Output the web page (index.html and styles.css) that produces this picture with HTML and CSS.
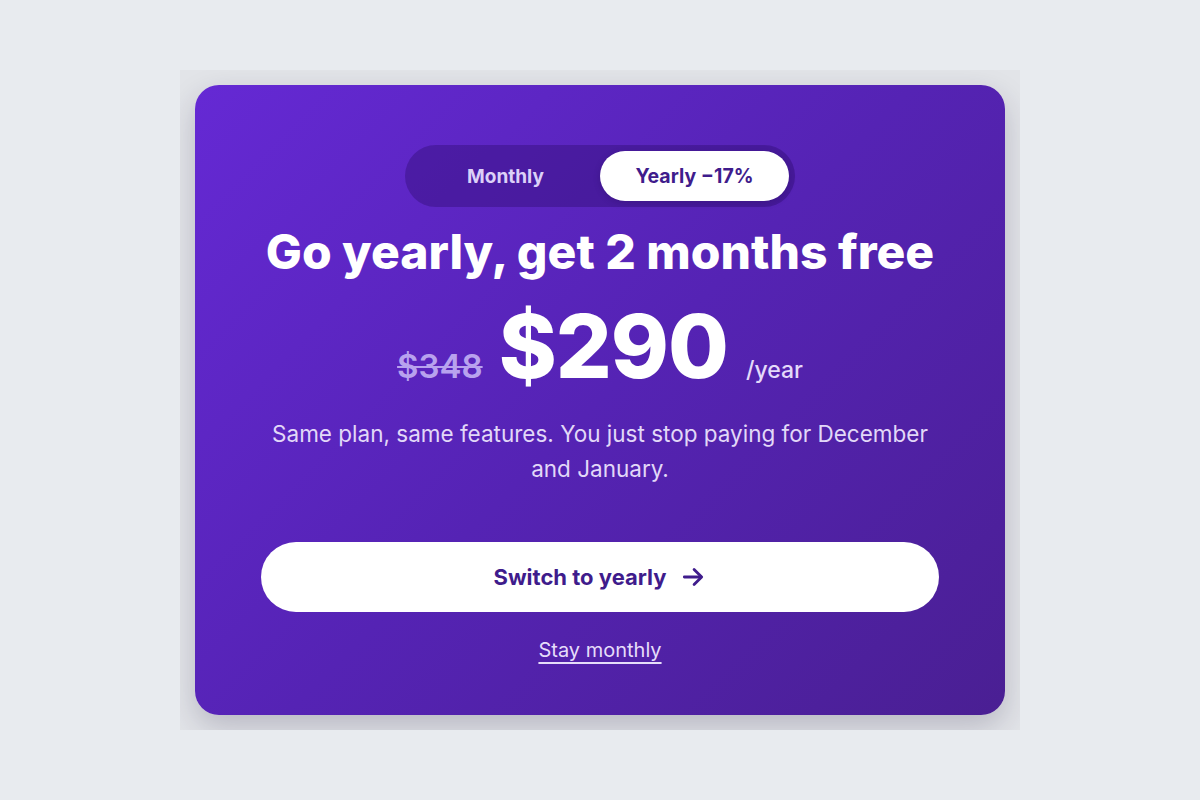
FILE: index.html
```html
<!DOCTYPE html>
<html>
<head>
    <link rel="stylesheet" href="styles.css">
    <title>Upgrade</title>
</head>
<body>
    <section class="stage">
        <div class="card">
            <div class="toggle">
                <button class="toggle-item">Monthly</button>
                <button class="toggle-item active">Yearly &minus;17%</button>
            </div>
            <h1 class="title">Go yearly, get 2 months free</h1>
            <div class="price">
                <span class="price-old">$348</span>
                <span class="price-new">$290</span>
                <span class="price-unit">/year</span>
            </div>
            <p class="note">Same plan, same features. You just stop paying for December and January.</p>
            <button class="cta">
                Switch to yearly
                <svg width="26" height="26" viewBox="0 0 24 24" fill="none" stroke="currentColor" stroke-width="2.6" stroke-linecap="round" stroke-linejoin="round">
                    <path d="M4 12h15" />
                    <path d="M13 5l7 7-7 7" />
                </svg>
            </button>
            <a class="stay" href="#">Stay monthly</a>
        </div>
    </section>
</body>
</html>
```

FILE: styles.css
```css
body {
    margin: 0;
    height: 100vh;
    display: flex;
    align-items: center;
    justify-content: center;
    background: #e8ebef;
    font-family: Inter, "Noto Sans", sans-serif;
}

.stage {
    width: 840px;
    height: 660px;
    box-sizing: border-box;
    padding: 15px;
    background: #e2e4e8;
    overflow: hidden;
}

.card {
    height: 100%;
    box-sizing: border-box;
    padding: 60px 66px 0;
    border-radius: 24px;
    background: linear-gradient(135deg, #6529d4 0%, #5523b4 50%, #4a1f93 100%);
    box-shadow: 0 12px 30px rgba(40, 30, 70, 0.22);
    display: flex;
    flex-direction: column;
    align-items: center;
    color: #fff;
}

.toggle {
    display: flex;
    padding: 6px;
    border-radius: 999px;
    background: rgba(40, 10, 100, 0.35);
}

.toggle-item {
    width: 189px;
    height: 50px;
    border: 0;
    border-radius: 999px;
    background: transparent;
    font: 700 19px Inter, sans-serif;
    color: #dcd0f8;
    cursor: pointer;
}

    .toggle-item.active {
        background: #fff;
        color: #3f1c8c;
        font-size: 19.5px;
        box-shadow: 0 2px 6px rgba(30, 10, 80, 0.25);
    }

.title {
    margin: 17px 0 0;
    font-size: 48px;
    font-weight: 800;
    line-height: 56px;
}

.price {
    display: flex;
    align-items: baseline;
    gap: 16px;
    margin: 22px 0 2px;
    line-height: 1;
}

.price-old {
    font-size: 33px;
    font-weight: 600;
    color: #b8a2ee;
    text-decoration: line-through;
    text-decoration-thickness: 2px;
}

.price-new {
    font-size: 88px;
    font-weight: 800;
    letter-spacing: -1px;
    margin-right: 2px;
}

.price-unit {
    font-size: 23px;
    font-weight: 500;
    color: #e4dafa;
}

.note {
    margin: 24px 0 0;
    font-size: 22.5px;
    line-height: 35px;
    text-align: center;
    color: #e2d8f8;
    max-width: 680px;
}

.cta {
    margin-top: 56px;
    width: 100%;
    height: 70px;
    flex-shrink: 0;
    border: 0;
    border-radius: 999px;
    background: #fff;
    color: #3f1c8c;
    font: 700 22px Inter, sans-serif;
    display: flex;
    align-items: center;
    justify-content: center;
    gap: 14px;
    cursor: pointer;
}

.stay {
    margin-top: 26px;
    font-size: 20px;
    color: #e6ddfa;
    text-underline-offset: 5px;
}
```
